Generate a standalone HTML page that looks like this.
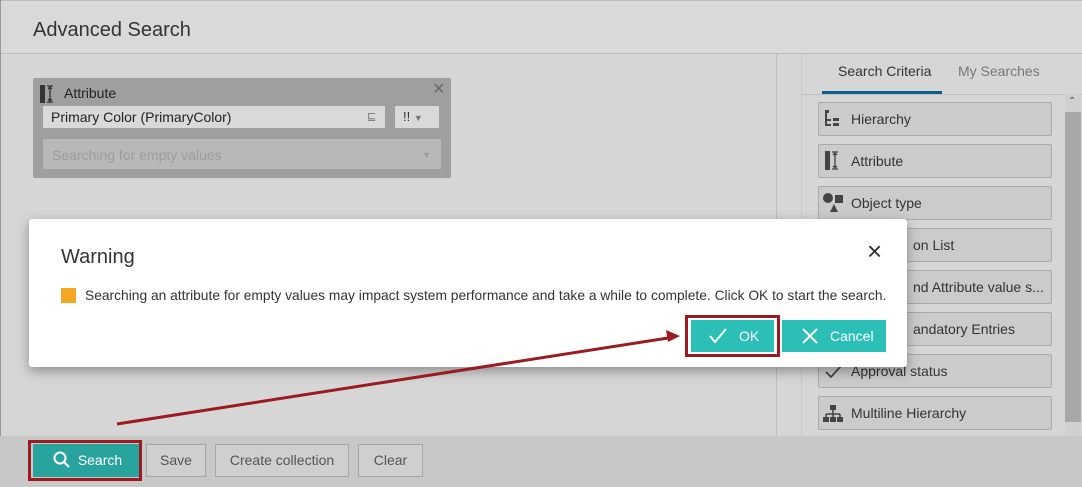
<!DOCTYPE html>
<html><head><style>
*{box-sizing:border-box;margin:0;padding:0}
body{width:1082px;height:487px;overflow:hidden;background:#d6d6d6;font-family:"Liberation Sans",sans-serif;position:relative;color:#333}
.abs{position:absolute}
.item{position:absolute;left:818px;width:234px;height:34px;border:1px solid #aaa;border-radius:2px;background:#cbcbcb;font-size:14px;line-height:32px;padding-left:32px;color:#333;white-space:nowrap;overflow:hidden}
.btn{position:absolute;top:444px;height:33px;border:1px solid #a6a6a6;background:#cfcfcf;font-size:14px;line-height:31px;text-align:center;color:#555}
</style></head><body>
<div class="abs" style="left:0;top:0;width:1082px;height:54px;background:#d9d9d9;border-bottom:1px solid #bdbdbd;border-top:1px solid #bbb"></div>
<div class="abs" style="left:0;top:0;width:1px;height:487px;background:#999"></div>
<div class="abs" style="left:33px;top:19px;font-size:20px;color:#333">Advanced Search</div>
<div class="abs" style="left:776px;top:54px;width:1px;height:382px;background:#bdbdbd"></div>
<div class="abs" style="left:801px;top:54px;width:1px;height:382px;background:#c8c8c8"></div>
<div class="abs" style="left:802px;top:94px;width:280px;height:1px;background:#c0c0c0"></div>
<div class="abs" style="left:838px;top:63px;font-size:14px;color:#333">Search Criteria</div>
<div class="abs" style="left:958px;top:63px;font-size:14px;color:#777">My Searches</div>
<div class="abs" style="left:822px;top:91px;width:120px;height:3px;background:#0d5e8f"></div>
<div class="abs" style="left:1065px;top:94px;width:16px;height:342px;background:#d0d0d0"></div>
<div class="abs" style="left:1065px;top:112px;width:16px;height:310px;background:#a8a8a8"></div>
<div class="abs" style="left:1068px;top:96px;font-size:10px;color:#555">&#8963;</div>
<div class="item" style="top:102px">Hierarchy</div>
<div class="item" style="top:144px">Attribute</div>
<div class="item" style="top:186px">Object type</div>
<div class="item" style="top:228px;padding-left:94px">on List</div>
<div class="item" style="top:270px;padding-left:94px">nd Attribute value s...</div>
<div class="item" style="top:312px;padding-left:94px">andatory Entries</div>
<div class="item" style="top:354px">Approval status</div>
<div class="item" style="top:396px">Multiline Hierarchy</div>
<svg class="abs" style="left:824px;top:108px" width="22" height="22"><rect x="1" y="2" width="4" height="3" fill="#444"/><rect x="1" y="5" width="2" height="13" fill="#444"/><rect x="1" y="11" width="6" height="2" fill="#444"/><rect x="1" y="16" width="6" height="2" fill="#444"/><rect x="9" y="10" width="6" height="3" fill="#444"/><rect x="9" y="15" width="6" height="3" fill="#444"/></svg>
<svg class="abs" style="left:824px;top:150px" width="22" height="22"><rect x="1" y="1" width="5" height="19" fill="#444"/><path d="M8 2h6M11 2v17M8 19h6M9 5l2-2 2 2M9 16l2 2 2-2" stroke="#444" stroke-width="1.3" fill="none"/></svg>
<svg class="abs" style="left:822px;top:192px" width="24" height="22"><circle cx="6" cy="6" r="5" fill="#444"/><path d="M8 20l4-8 4 8z" fill="#444"/><rect x="13" y="3" width="8" height="8" fill="#444"/></svg>
<svg class="abs" style="left:824px;top:362px" width="20" height="20"><path d="M2 10l5 5 10-11" stroke="#444" stroke-width="1.8" fill="none"/></svg>
<svg class="abs" style="left:822px;top:404px" width="22" height="20"><rect x="8" y="1" width="6" height="5" fill="#444"/><path d="M11 6v4M4 10h14M4 10v4M11 10v4M18 10v4" stroke="#444" stroke-width="1.5"/><rect x="1" y="13" width="6" height="5" fill="#444"/><rect x="8" y="13" width="6" height="5" fill="#444"/><rect x="15" y="13" width="6" height="5" fill="#444"/></svg>
<div class="abs" style="left:33px;top:78px;width:418px;height:100px;background:#9f9f9f;border-radius:2px"></div>
<svg class="abs" style="left:39px;top:84px" width="20" height="20"><rect x="1" y="1" width="5" height="18" fill="#333"/><path d="M8 2h6M11 2v16M8 18h6M9 5l2-2 2 2M9 15l2 2 2-2" stroke="#333" stroke-width="1.3" fill="none"/></svg>
<div class="abs" style="left:64px;top:85px;font-size:14px;color:#222">Attribute</div>
<div class="abs" style="left:433px;top:78px;font-size:20px;color:#666">×</div>
<div class="abs" style="left:43px;top:106px;width:342px;height:22px;background:#d9d9d9;font-size:14px;line-height:22px;padding-left:8px;color:#222">Primary Color (PrimaryColor)</div>
<div class="abs" style="left:367px;top:110px;font-size:11px;color:#777">⊑</div>
<div class="abs" style="left:395px;top:106px;width:44px;height:22px;background:#d9d9d9;font-size:13px;line-height:22px;padding-left:8px;color:#333">!! <span style="font-size:9px;color:#777">▼</span></div>
<div class="abs" style="left:43px;top:139px;width:398px;height:30px;background:#b8b8b8;font-size:14px;line-height:32px;padding-left:9px;color:#9c9c9c">Searching for empty values<span style="position:absolute;right:10px;font-size:9px;color:#999">▼</span></div>
<div class="abs" style="left:0;top:436px;width:1082px;height:51px;background:#c8c8c8"></div>
<div class="btn" style="left:33px;width:106px;background:#28a39e;border-color:#28a39e;color:#fff;padding-left:28px">Search</div>
<svg class="abs" style="left:52px;top:450px" width="20" height="20"><circle cx="8" cy="8" r="5.5" stroke="#fff" stroke-width="2" fill="none"/><path d="M12 12l5 5" stroke="#fff" stroke-width="2.2"/></svg>
<div class="abs" style="left:28px;top:440px;width:114px;height:41px;border:3px solid #9b1b20"></div>
<div class="btn" style="left:146px;width:60px">Save</div>
<div class="btn" style="left:215px;width:134px">Create collection</div>
<div class="btn" style="left:358px;width:65px">Clear</div>
<div class="abs" style="left:29px;top:219px;width:878px;height:148px;background:#fff;border-radius:3px;box-shadow:0 4px 12px rgba(0,0,0,.35)"></div>
<div class="abs" style="left:61px;top:246px;font-size:20px;color:#333">Warning</div>
<div class="abs" style="left:867px;top:238px;font-size:26px;color:#333;line-height:26px">×</div>
<div class="abs" style="left:61px;top:288px;width:15px;height:15px;background:#f5a623"></div>
<div class="abs" style="left:85px;top:288px;font-size:13.8px;color:#333;white-space:nowrap">Searching an attribute for empty values may impact system performance and take a while to complete. Click OK to start the search.</div>
<div class="abs" style="left:691px;top:320px;width:83px;height:32px;background:#2bbfb8;color:#fff;font-size:14px;line-height:32px;padding-left:48px">OK</div>
<svg class="abs" style="left:708px;top:327px" width="20" height="18"><path d="M2 9l5 6 11-13" stroke="#fff" stroke-width="2" fill="none"/></svg>
<div class="abs" style="left:685px;top:315px;width:95px;height:42px;border:3px solid #9b1b20"></div>
<div class="abs" style="left:782px;top:320px;width:104px;height:32px;background:#2bbfb8;color:#fff;font-size:14px;line-height:32px;padding-left:48px">Cancel</div>
<svg class="abs" style="left:801px;top:327px" width="18" height="18"><path d="M2 2l14 14M16 2L2 16" stroke="#fff" stroke-width="2"/></svg>
<svg class="abs" style="left:0;top:0" width="1082" height="487"><path d="M117 424L668 338" stroke="#9b1b20" stroke-width="3"/><path d="M680 336l-14-6 2 12z" fill="#9b1b20"/></svg>
</body></html>
